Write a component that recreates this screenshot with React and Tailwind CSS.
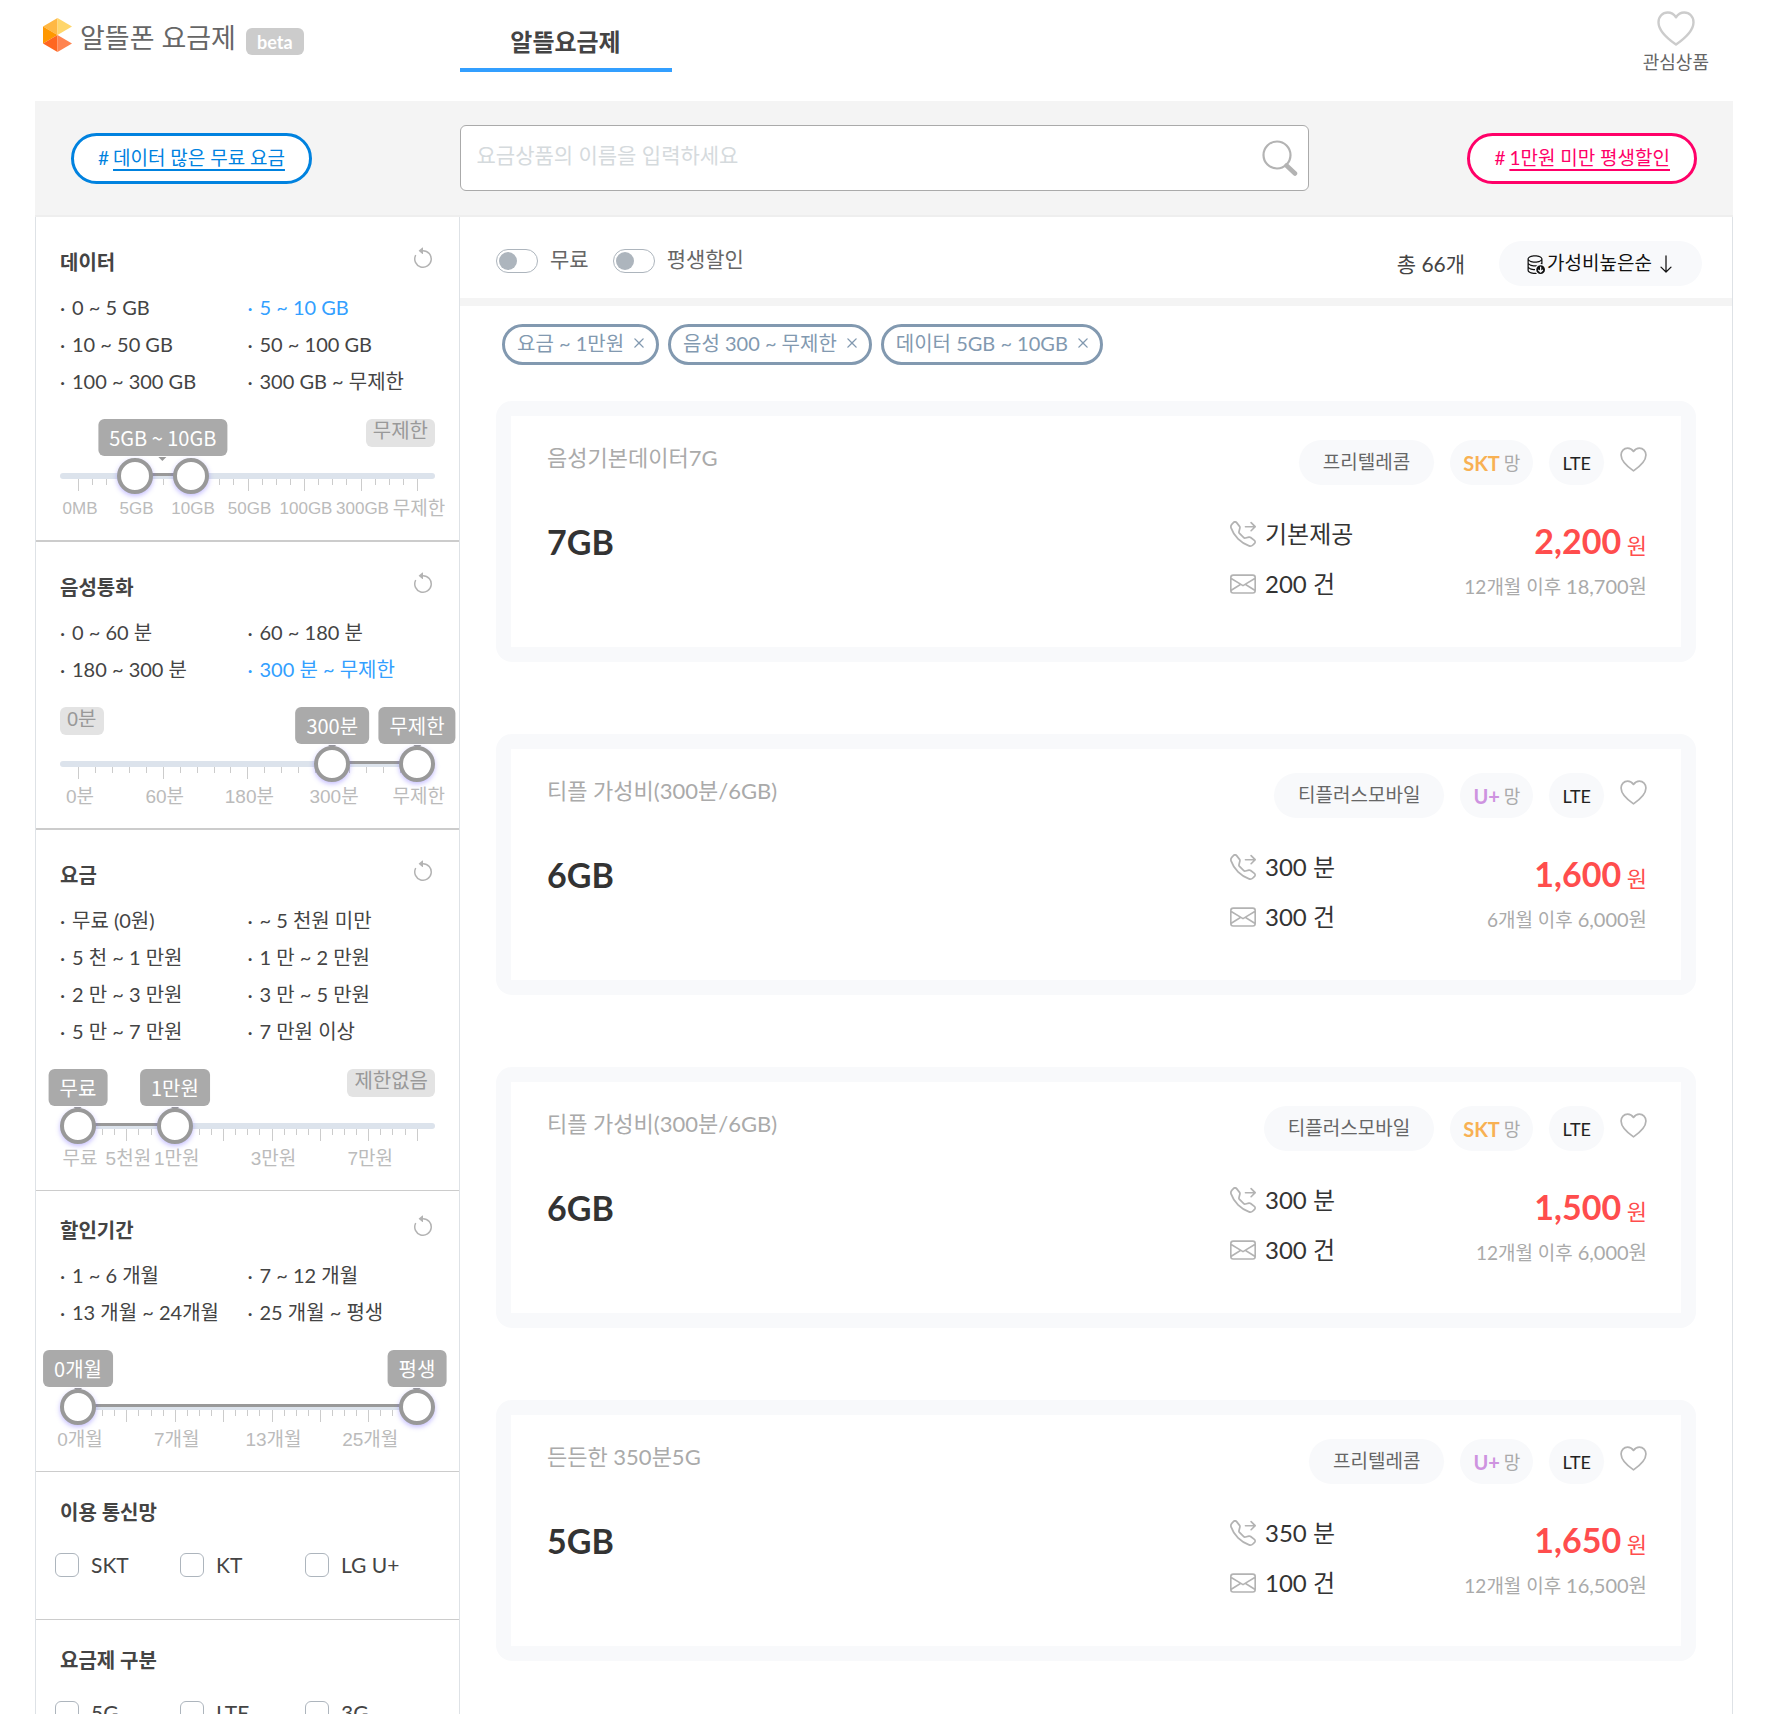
import { useState } from "react";
import clsx from "clsx";
import {
  BsArrowCounterclockwise,
  BsArrowDown,
  BsDatabaseDown,
  BsEnvelope,
  BsTelephoneForward,
  BsX,
} from "react-icons/bs";

const RANGE_FILTERS = [
  {
    title: "데이터",
    options: ["0 ~ 5 GB", "5 ~ 10 GB", "10 ~ 50 GB", "50 ~ 100 GB", "100 ~ 300 GB", "300 GB ~ 무제한"],
    selected: "5 ~ 10 GB",
    steps: 24,
    major: 4,
    from: 4,
    to: 8,
    tooltips: [{ at: 6, text: "5GB ~ 10GB" }],
    limitRight: "무제한",
    labels: { 0: "0MB", 4: "5GB", 8: "10GB", 12: "50GB", 16: "100GB", 20: "300GB", 24: "무제한" },
    border: "border-b-2",
    top: "pt-[30px]",
  },
  {
    title: "음성통화",
    options: ["0 ~ 60 분", "60 ~ 180 분", "180 ~ 300 분", "300 분 ~ 무제한"],
    selected: "300 분 ~ 무제한",
    steps: 20,
    major: 5,
    from: 15,
    to: 20,
    tooltips: [{ at: 15, text: "300분" }, { at: 20, text: "무제한" }],
    limitLeft: "0분",
    labels: { 0: "0분", 5: "60분", 10: "180분", 15: "300분", 20: "무제한" },
    border: "border-b-2",
    top: "pt-[30px]",
  },
  {
    title: "요금",
    options: ["무료 (0원)", "~ 5 천원 미만", "5 천 ~ 1 만원", "1 만 ~ 2 만원", "2 만 ~ 3 만원", "3 만 ~ 5 만원", "5 만 ~ 7 만원", "7 만원 이상"],
    steps: 28,
    major: 4,
    from: 0,
    to: 8,
    tooltips: [{ at: 0, text: "무료" }, { at: 8, text: "1만원" }],
    limitRight: "제한없음",
    labels: { 0: "무료", 4: "5천원", 8: "1만원", 16: "3만원", 24: "7만원" },
    border: "border-b",
    top: "pt-[30px]",
  },
  {
    title: "할인기간",
    options: ["1 ~ 6 개월", "7 ~ 12 개월", "13 개월 ~ 24개월", "25 개월 ~ 평생"],
    steps: 28,
    major: 4,
    from: 0,
    to: 28,
    tooltips: [{ at: 0, text: "0개월" }, { at: 28, text: "평생" }],
    labels: { 0: "0개월", 8: "7개월", 16: "13개월", 24: "25개월" },
    border: "border-b",
    top: "pt-6",
  },
];

const CHECK_FILTERS = [
  { title: "이용 통신망", options: ["SKT", "KT", "LG U+"] },
  { title: "요금제 구분", options: ["5G", "LTE", "3G"] },
];

const CHIPS = ["요금 ~ 1만원", "음성 300 ~ 무제한", "데이터 5GB ~ 10GB"];

const PLANS = [
  { id: 1, name: "음성기본데이터7G", data: "7GB", carrier: "프리텔레콤", net: "SKT", voice: "기본제공", sms: "200 건", price: "2,200", after: "12개월 이후", afterPrice: "18,700원" },
  { id: 2, name: "티플 가성비(300분/6GB)", data: "6GB", carrier: "티플러스모바일", net: "U+", voice: "300 분", sms: "300 건", price: "1,600", after: "6개월 이후", afterPrice: "6,000원" },
  { id: 3, name: "티플 가성비(300분/6GB)", data: "6GB", carrier: "티플러스모바일", net: "SKT", voice: "300 분", sms: "300 건", price: "1,500", after: "12개월 이후", afterPrice: "6,000원" },
  { id: 4, name: "든든한 350분5G", data: "5GB", carrier: "프리텔레콤", net: "U+", voice: "350 분", sms: "100 건", price: "1,650", after: "12개월 이후", afterPrice: "16,500원" },
];

const HeartIcon = ({ className }) => (
  <svg viewBox="0 0 38 35" fill="none" stroke="currentColor" strokeWidth="2.4" className={className}>
    <path d="M19 6.2C16.8 3 13.9 1.5 10.8 1.5 5.5 1.5 1.5 5.6 1.5 11.2c0 8.600 8.800 16.300 17.500 22.300 8.700-6 17.500-13.700 17.500-22.300 0-5.600-4-9.700-9.300-9.700-3.100 0-6 1.500-8.200 4.700Z" strokeLinejoin="round" />
  </svg>
);

const Logo = () => (
  <svg viewBox="0 0 29 34" className="h-[34px] w-[29px]">
    <polygon points="14.5,0 0,8.5 14.5,17" fill="#ffb844" />
    <polygon points="14.5,0 29,8.5 14.5,17" fill="#ffd66b" />
    <polygon points="0,8.5 14.5,17 0,25.5" fill="#ff9800" />
    <polygon points="0,25.5 14.5,17 14.5,34" fill="#ff6620" />
    <polygon points="14.5,17 29,25.5 14.5,34" fill="#ff8450" />
  </svg>
);

const SearchIcon = () => (
  <svg viewBox="0 0 36 36" fill="none" stroke="#b3b3b3" className="size-9">
    <circle cx="15" cy="15" r="13.5" strokeWidth="2.2" />
    <path d="M24.5 25.5l8.500 8" strokeWidth="4.5" strokeLinecap="round" />
  </svg>
);

const Header = () => (
  <header className="flex h-[101px]">
    <div className="flex w-1/4 shrink-0 items-start pt-[18px] pl-2">
      <Logo />
      <h1 className="ml-2 text-[27px] leading-10 text-[#666]">알뜰폰 요금제</h1>
      <span className="mt-2.5 ml-2.5 h-[27px] rounded-md bg-[#ccc] px-[11px] text-lg leading-7 font-bold text-white">beta</span>
    </div>
    <nav className="flex-1">
      <a href="#plans" className="block h-[72px] w-[212px] border-b-4 border-[#339fff] pt-6 text-center text-2xl leading-9 font-bold text-[#444]">
        알뜰요금제
      </a>
    </nav>
    <button className="mr-6 flex shrink-0 flex-col items-center pt-[11px] text-[#666]">
      <HeartIcon className="h-[35px] w-[38px] text-[#ccc]" />
      <span className="mt-1 text-lg leading-6">관심상품</span>
    </button>
  </header>
);

const SearchBar = () => (
  <div className="flex h-[116px] items-center border-b-2 border-[#eee] bg-[#f4f4f4]">
    <div className="w-1/4 pl-9">
      <button className="flex h-[51px] items-center gap-1 rounded-full border-3 border-[#0082df] bg-white px-6 text-[19px] text-[#0082df]">
        #<span className="underline decoration-2 underline-offset-4">데이터 많은 무료 요금</span>
      </button>
    </div>
    <label className="flex h-[66px] w-1/2 items-center rounded-md border border-[#aaa] bg-white pr-2.5 pl-4">
      <input
        type="text"
        aria-label="요금상품 검색"
        placeholder="요금상품의 이름을 입력하세요"
        className="mb-1.5 min-w-0 flex-1 text-[21px] outline-none placeholder:text-[#d5dadd]"
      />
      <SearchIcon />
    </label>
    <div className="flex w-1/4 justify-end pr-9">
      <button className="flex h-[51px] items-center gap-1 rounded-full border-3 border-[#ff0068] bg-white px-6 text-[19px] text-[#ff0068]">
        #<span className="underline decoration-2 underline-offset-4">1만원 미만 평생할인</span>
      </button>
    </div>
  </div>
);

const limitClass =
  "absolute top-0 h-7 rounded-md bg-[#e3e3e3] px-[7px] font-['Liberation_Sans','Noto_Sans_CJK_KR',sans-serif] text-[20px] leading-6 text-[#999]";

const thumbClass =
  "pointer-events-none absolute inset-x-0 top-[39px] h-9 w-full appearance-none bg-transparent [&::-webkit-slider-thumb]:pointer-events-auto [&::-webkit-slider-thumb]:size-9 [&::-webkit-slider-thumb]:appearance-none [&::-webkit-slider-thumb]:rounded-full [&::-webkit-slider-thumb]:border-4 [&::-webkit-slider-thumb]:border-[#999] [&::-webkit-slider-thumb]:bg-white [&::-webkit-slider-thumb]:shadow-[0_2px_5px_rgba(90,70,255,0.35)]";

const RangeSlider = ({ filter }) => {
  const [from, setFrom] = useState(filter.from);
  const [to, setTo] = useState(filter.to);
  const { steps, major, labels } = filter;
  // the handle is 36px wide, so its centre runs from 18px to 100% - 18px
  const position = (value) => `calc(18px + (100% - 36px) * ${value / steps})`;

  return (
    <div className="relative h-[100px]">
      {filter.limitLeft && <span className={clsx(limitClass, "left-0")}>{filter.limitLeft}</span>}
      {filter.limitRight && <span className={clsx(limitClass, "right-0")}>{filter.limitRight}</span>}
      <div className="absolute inset-x-0 top-[54px] h-1.5 rounded-full bg-[#dce3ec]" />
      <div className="absolute inset-x-[18px] top-[60px] flex justify-between">
        {Array.from({ length: steps + 1 }, (_, i) => (
          <div key={i} className="relative w-0">
            <div className={clsx("w-px bg-[#ccc]", i % major === 0 ? "h-3" : "h-1.5")} />
            {labels[i] && (
              <span
                className={clsx(
                  "absolute top-[18px] left-0.5 -translate-x-1/2 font-['Liberation_Sans','Noto_Sans_CJK_KR',sans-serif] leading-6 whitespace-nowrap text-[#bbb]",
                  /[가-힣]/.test(labels[i]) ? "text-[19px]" : "text-[17px]"
                )}
              >
                {labels[i]}
              </span>
            )}
          </div>
        ))}
      </div>
      <div
        className="absolute top-[54px] h-[3px] bg-[#999]"
        style={{ left: position(from), right: position(steps - to) }}
      />
      {filter.tooltips.map((tip) => (
        <span
          key={tip.text}
          className="absolute top-0 h-[37px] -translate-x-1/2 rounded-md bg-[#aaa] px-[11px] font-['Noto_Sans_CJK_KR',sans-serif] text-xl leading-[38px] whitespace-nowrap text-white after:absolute after:top-[38px] after:left-1/2 after:-ml-1 after:border-4 after:border-b-0 after:border-transparent after:border-t-[#999]"
          style={{ left: position(tip.at) }}
        >
          {tip.text}
        </span>
      ))}
      <input
        type="range"
        aria-label={`${filter.title} 최소`}
        min={0}
        max={steps}
        value={from}
        onChange={(e) => setFrom(Math.min(Number(e.target.value), to))}
        className={thumbClass}
      />
      <input
        type="range"
        aria-label={`${filter.title} 최대`}
        min={0}
        max={steps}
        value={to}
        onChange={(e) => setTo(Math.max(Number(e.target.value), from))}
        className={thumbClass}
      />
    </div>
  );
};

const RangeFilter = ({ filter }) => (
  <section className={clsx("border-[#ccc] px-6 pb-[21px]", filter.border, filter.top)}>
    <div className="flex h-[30px] items-center justify-between">
      <h2 className="text-xl font-bold text-[#444]">{filter.title}</h2>
      <button aria-label={`${filter.title} 초기화`} className="mb-1.5 text-[#b3b3b3]">
        <BsArrowCounterclockwise className="size-6" />
      </button>
    </div>
    <ul className="mt-3 mb-[19px] grid grid-cols-2 text-xl leading-[37px] text-[#444]">
      {filter.options.map((option) => (
        <li key={option} className={clsx("flex whitespace-nowrap", option === filter.selected && "text-[#339fff]")}>
          <span className="w-3">·</span>
          <button>{option}</button>
        </li>
      ))}
    </ul>
    <RangeSlider filter={filter} />
  </section>
);

const CheckFilter = ({ filter }) => (
  <section className="border-b border-[#ccc] px-6 pt-[25px] pb-[42px]">
    <h2 className="text-xl leading-[30px] font-bold text-[#444]">{filter.title}</h2>
    <div className="mt-[26px] mr-[5px] -ml-[5px] grid grid-cols-3">
      {filter.options.map((option) => (
        <label key={option} className="flex h-6 items-center gap-3 text-[21px] whitespace-nowrap text-[#444]">
          <input type="checkbox" className="size-6 appearance-none rounded-md border border-[#adb5bd] bg-white checked:bg-[#339fff]" />
          {option}
        </label>
      ))}
    </div>
  </section>
);

const Toggle = ({ label }) => (
  <label className="flex items-center gap-3 text-[21px] leading-6 text-[#666]">
    <input
      type="checkbox"
      role="switch"
      className="h-6 w-[42px] appearance-none rounded-full border border-[#adb5bd] p-0.5 before:block before:size-[18px] before:rounded-full before:bg-[#adb5bd] checked:before:ml-[18px]"
    />
    <span className="pb-1">{label}</span>
  </label>
);

const PlanCard = ({ plan }) => (
  <article className="h-[261px] rounded-2xl bg-[#f8f9fb] p-[15px]">
    <div className="h-full bg-white pt-6 pr-[34px] pl-9">
      <div className="flex items-start justify-between">
        <h3 className="text-[22px] leading-9 text-[#aaa]">{plan.name}</h3>
        <div className="flex gap-4">
          <span className="flex h-[45px] items-center rounded-full bg-[#f8f9fb] px-6 text-[19px] text-[#666]">{plan.carrier}</span>
          <span className="flex h-[45px] items-center gap-1 rounded-full bg-[#f8f9fb] px-[13px] text-lg text-[#aaa]">
            <b className={clsx("text-xl", plan.net === "SKT" ? "text-[#f8b153]" : "text-[#ce93e0]")}>{plan.net}</b>
            망
          </span>
          <span className="flex h-[45px] items-center rounded-full bg-[#f8f9fb] px-[13px] text-lg text-[#222]">LTE</span>
          <button aria-label="관심상품 담기" className="self-start pt-[7px] text-[#b3b3b3]">
            <HeartIcon className="h-[25px] w-[27px]" />
          </button>
        </div>
      </div>
      <div className="mt-4 flex justify-between">
        <strong className="mt-[21px] text-[34px] leading-10 text-[#333]">{plan.data}</strong>
        <div className="flex">
          <div className="w-[221px] text-2xl leading-[50px] text-[#333]">
            <p className="flex items-center gap-[9px] pt-2">
              <BsTelephoneForward className="size-[26px] text-[#b3b3b3]" />
              {plan.voice}
            </p>
            <p className="flex items-center gap-[9px]">
              <BsEnvelope className="size-[26px] text-[#b3b3b3]" />
              {plan.sms}
            </p>
          </div>
          <div className="w-[196px] pt-5 text-right whitespace-nowrap">
            <p className="text-[22px] leading-10 text-[#ff4d4d]">
              <strong className="text-[34px]">{plan.price}</strong> 원
            </p>
            <p className="mt-0.5 text-[19px] leading-9 text-[#aaa]">
              {plan.after} <span className="text-xl leading-9">{plan.afterPrice}</span>
            </p>
          </div>
        </div>
      </div>
    </div>
  </article>
);

export default function App() {
  return (
    <div className="min-h-screen bg-white pr-10 pl-[35px] font-['Lato','Noto_Sans_CJK_KR',sans-serif]">
      <Header />
      <SearchBar />
      <div className="flex items-stretch border-x border-[#dee2e6]">
        <aside className="w-1/4 border-r border-[#dee2e6]">
          {RANGE_FILTERS.map((filter) => (
            <RangeFilter key={filter.title} filter={filter} />
          ))}
          {CHECK_FILTERS.map((filter) => (
            <CheckFilter key={filter.title} filter={filter} />
          ))}
        </aside>
        <main id="plans" className="w-3/4">
          <div className="flex h-[89px] items-start justify-between border-b-8 border-[#f4f4f4] pr-[30px] pl-9">
            <div className="flex gap-6 pt-[30px]">
              <Toggle label="무료" />
              <Toggle label="평생할인" />
            </div>
            <div className="flex items-center gap-[34px] pt-6">
              <span className="text-[21px] text-[#444]">총 66개</span>
              <button className="flex h-[45px] items-center rounded-full bg-[#f8f9fb] px-[26px] text-[19px] text-[#111]">
                <BsDatabaseDown className="mr-0.5 size-5" />
                가성비높은순
                <BsArrowDown className="ml-1 size-5" />
              </button>
            </div>
          </div>
          <div className="flex gap-[9px] pt-[18px] pl-[42px]">
            {CHIPS.map((chip) => (
              <button key={chip} className="flex h-[41px] items-center gap-1 rounded-full border-3 border-[#8299b0] pr-1.5 pb-1 pl-3 text-xl text-[#8299b0]">
                {chip}
                <BsX className="size-[22px]" />
              </button>
            ))}
          </div>
          <div className="flex flex-col gap-[72px] px-9 pt-9">
            {PLANS.map((plan) => (
              <PlanCard key={plan.id} plan={plan} />
            ))}
          </div>
        </main>
      </div>
    </div>
  );
}
